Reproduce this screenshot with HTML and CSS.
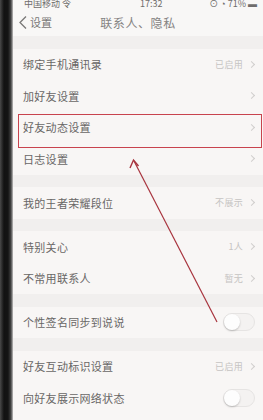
FILE: index.html
```html
<!DOCTYPE html>
<html lang="zh">
<head>
<meta charset="utf-8">
<link rel="stylesheet" href="styles.css">
</head>
<body>
<div class="phone">
  <div class="bezel"></div>
  <div class="screen">
    <div class="status">
      <span class="carrier">中国移动 令</span>
      <span class="time">17:32</span>
      <span class="batt">⊙ ◔ 71% ▬</span>
    </div>
    <div class="nav">
      <div class="back">
        <svg width="8" height="13" viewBox="0 0 8 13"><polyline points="7,0.5 1,6.5 7,12.5" fill="none" stroke="#7a7877" stroke-width="1.3"/></svg>
        <span>设置</span>
      </div>
      <div class="title">联系人、隐私</div>
    </div>

    <div class="group">
      <div class="row"><span class="label">绑定手机通讯录</span><span class="value">已启用</span><span class="chev"></span></div>
      <div class="row"><span class="label">加好友设置</span><span class="chev"></span></div>
      <div class="row highlight"><span class="label">好友动态设置</span><span class="chev"></span></div>
      <div class="row"><span class="label">日志设置</span><span class="chev"></span></div>
    </div>

    <div class="group">
      <div class="row"><span class="label">我的王者荣耀段位</span><span class="value">不展示</span><span class="chev"></span></div>
    </div>

    <div class="group">
      <div class="row"><span class="label">特别关心</span><span class="value">1人</span><span class="chev"></span></div>
      <div class="row"><span class="label">不常用联系人</span><span class="value">暂无</span><span class="chev"></span></div>
    </div>

    <div class="group">
      <div class="row"><span class="label">个性签名同步到说说</span><span class="toggle"><i></i></span></div>
    </div>

    <div class="group">
      <div class="row"><span class="label">好友互动标识设置</span><span class="value">已启用</span><span class="chev"></span></div>
      <div class="row"><span class="label">向好友展示网络状态</span><span class="toggle"><i></i></span></div>
      <div class="row short"><span class="toggle"><i></i></span></div>
    </div>
  </div>

  <svg class="arrow" width="263" height="420" viewBox="0 0 263 420">
    <line x1="217" y1="322" x2="134" y2="161" stroke="#a8343e" stroke-width="1.2"/>
    <polyline points="130,168 133.5,160 138.5,166" fill="none" stroke="#a8343e" stroke-width="1.4"/>
  </svg>
</div>
</body>
</html>
```

FILE: styles.css
```css
* { box-sizing: border-box; margin: 0; padding: 0; }
html, body { width: 263px; height: 420px; overflow: hidden; background: #f3f1f0; }
body { font-family: "Noto Sans CJK SC", "Noto Sans", sans-serif; }

.phone { position: relative; display: flex; width: 263px; height: 420px; overflow: hidden; }

.bezel {
  flex: 0 0 13px;
  height: 100%;
  background: linear-gradient(to right, #4a4a4a 0, #2c2c2c 2px, #121212 4px, #141414 8px, #3c3c3c 10.5px, #7a7a7a 12px, #c9c7c6 13px);
}

.screen { flex: 1; display: flex; flex-direction: column; background: #f1efee; }
.screen > * { flex-shrink: 0; }

.status {
  height: 8px; overflow: hidden;
  display: flex; justify-content: space-between; align-items: flex-end;
  padding: 0 6px 0 11px;
  background: #f8f7f6;
  font-size: 9px; line-height: 9px; color: #6f6d6c;
}
.status .time { margin-left: 22px; }

.nav {
  height: 28px; position: relative;
  display: flex; align-items: center;
  background: #f8f7f6;
  padding-left: 6px;
}
.back { display: flex; align-items: center; gap: 3px; color: #7a7877; font-size: 11px; }
.back svg { display: block; }
.title {
  position: absolute; left: 0; right: 0; text-align: center;
  font-size: 12px; letter-spacing: 0.6px; color: #858382;
}

.group { margin-top: 12.5px; background: #f8f6f5; }
.group:first-of-type { margin-top: 13px; }

.row {
  position: relative;
  height: 31.5px;
  display: flex; align-items: center;
  padding: 0 6px 0 10px;
  font-size: 11px;
}
.row.short { justify-content: flex-end; }
.label { flex: 1; color: #686665; letter-spacing: 0.3px; }
.value { font-size: 9px; color: #c6c4c3; margin-right: 6px; letter-spacing: 0.3px; }
.chev {
  width: 5px; height: 5px;
  border-top: 1px solid #d0cecd; border-right: 1px solid #d0cecd;
  transform: rotate(45deg);
  margin-right: 3px;
}

.highlight::after {
  content: "";
  position: absolute;
  left: 5px; right: 1px; top: 2px; bottom: -4.5px;
  border: 1.5px solid #c8434e;
}

.toggle {
  position: relative;
  width: 32px; height: 18px; border-radius: 9px;
  background: #f4f2f1; border: 1px solid #e6e4e3;
  margin-right: 2px;
}
.toggle i {
  position: absolute; left: 0; top: 0;
  width: 16px; height: 16px; border-radius: 50%;
  background: #fdfdfd;
  box-shadow: 0 1px 2px rgba(0,0,0,0.22);
}

.arrow { position: absolute; left: 0; top: 0; pointer-events: none; }
```
